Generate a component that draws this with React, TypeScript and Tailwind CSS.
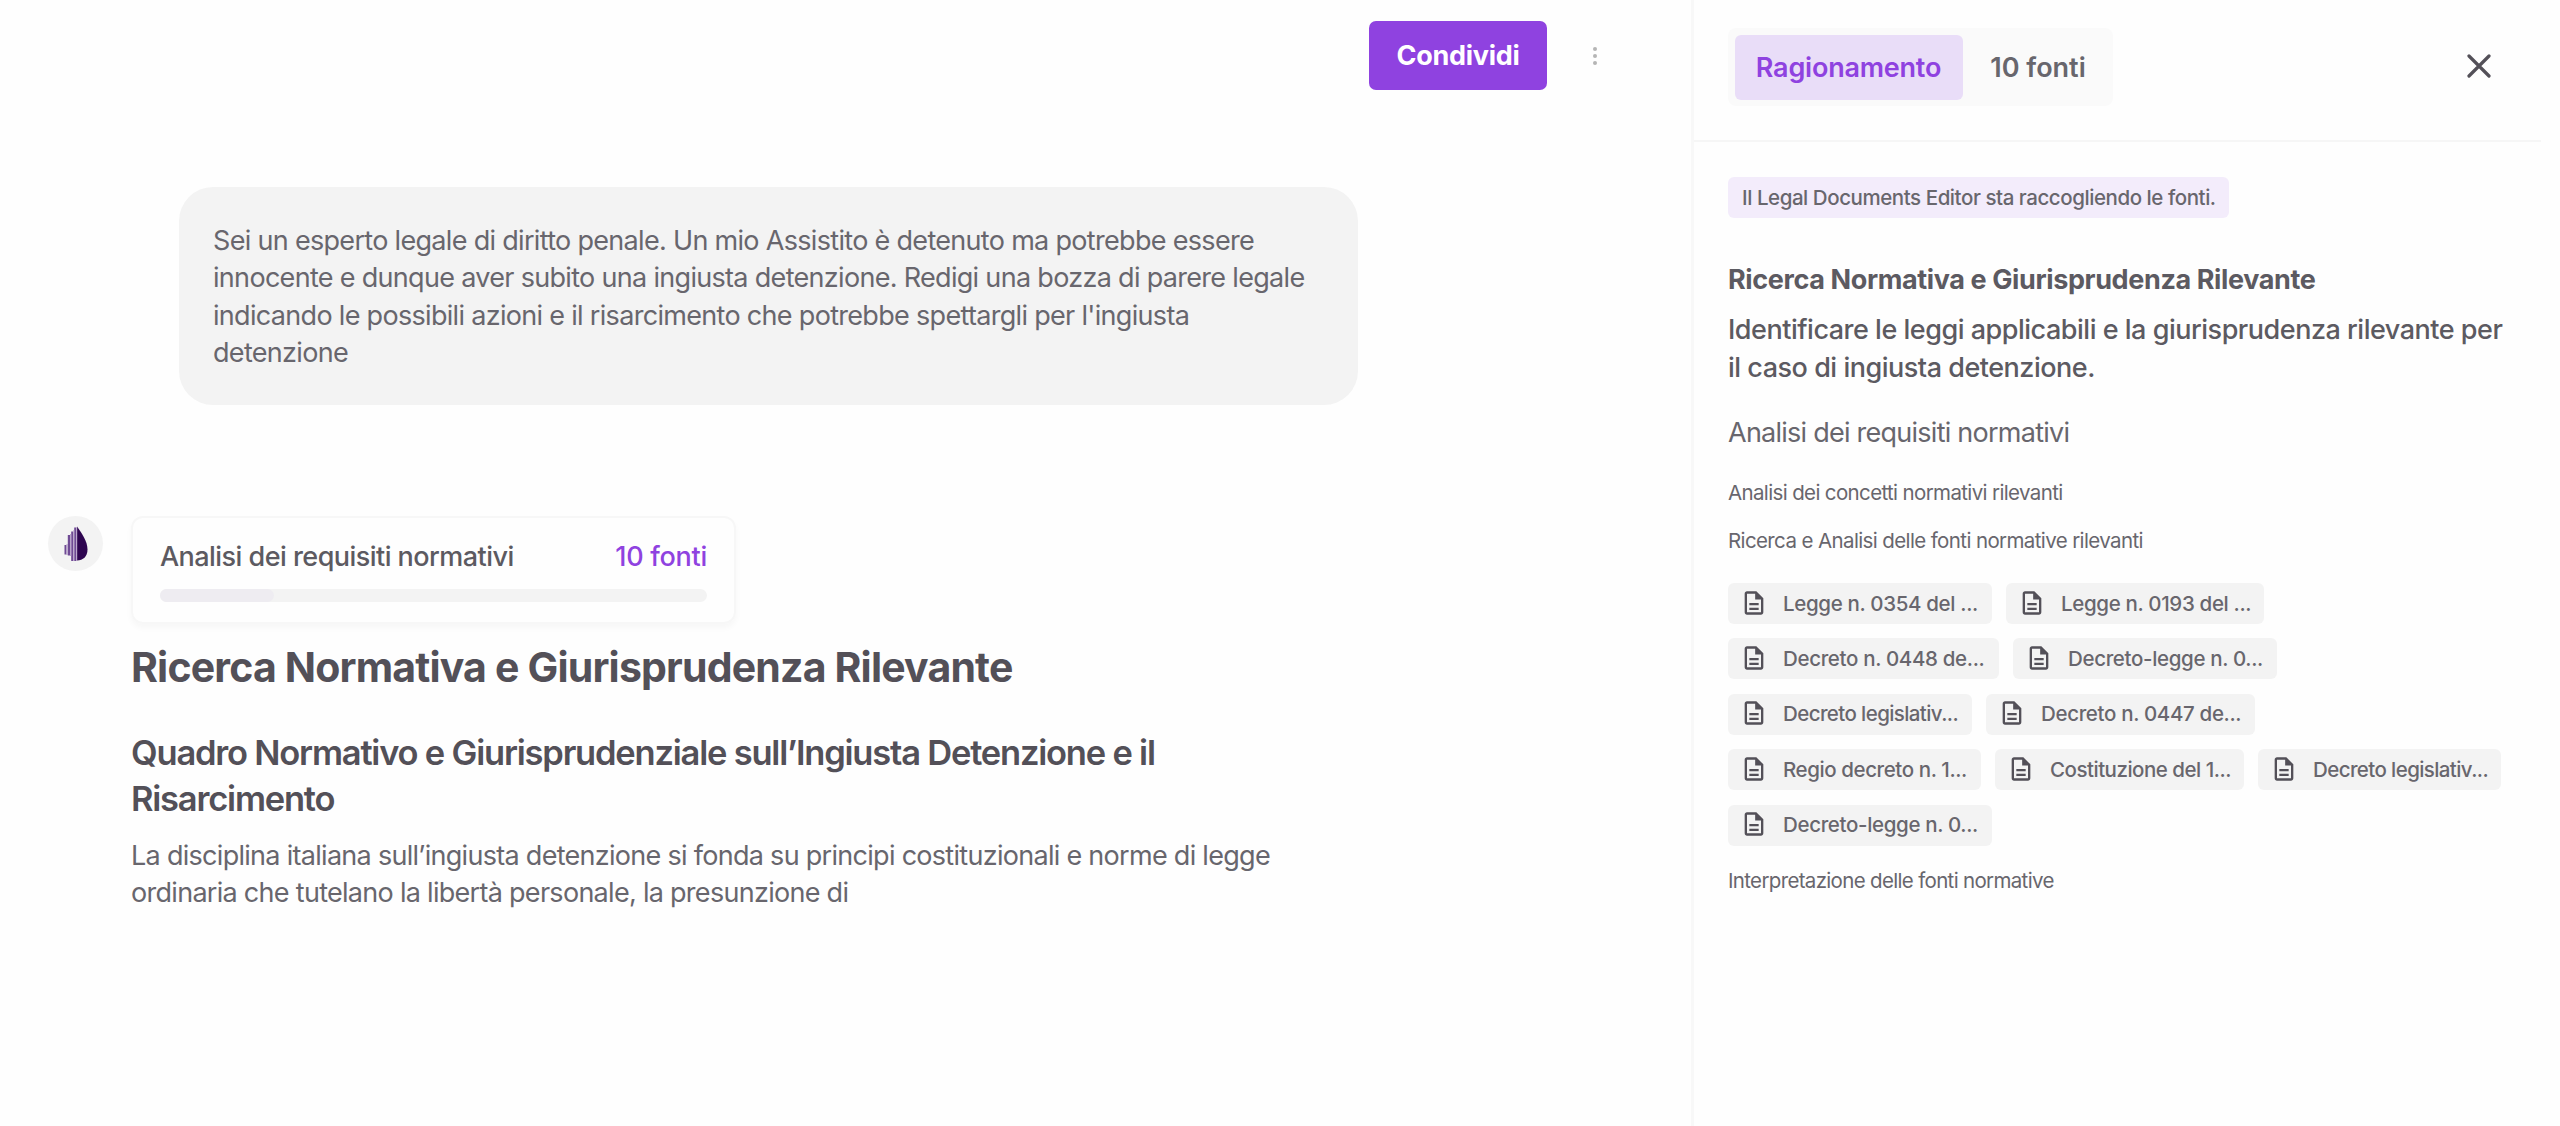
import { MdOutlineDescription } from 'react-icons/md';

type Source = {
    label: string;
    width: string;
};

const sourceRows: Source[][] = [
    [
        { label: 'Legge n. 0354 del ...', width: 'w-[264px]' },
        { label: 'Legge n. 0193 del ...', width: 'w-[258px]' },
    ],
    [
        { label: 'Decreto n. 0448 de...', width: 'w-[271px]' },
        { label: 'Decreto-legge n. 0...', width: 'w-[264px]' },
    ],
    [
        { label: 'Decreto legislativ...', width: 'w-[244px] tracking-[-0.029em]' },
        { label: 'Decreto n. 0447 de...', width: 'w-[269px]' },
    ],
    [
        { label: 'Regio decreto n. 1...', width: 'w-[253px] tracking-[-0.02em]' },
        { label: 'Costituzione del 1...', width: 'w-[249px] tracking-[-0.024em]' },
        { label: 'Decreto legislativ...', width: 'w-[243px] tracking-[-0.029em]' },
    ],
    [{ label: 'Decreto-legge n. 0...', width: 'w-[264px]' }],
];

const Logo = () => (
    <svg width="24" height="36" viewBox="0 0 24 36">
        <path d="M13 0.5C17 6 23.5 15 23.5 23.5c0 7-4.5 11-10.5 11z" fill="#2e0550" />
        <g fill="#6f4a94">
            <rect x="10.2" y="1.5" width="2.2" height="33.5" />
            <rect x="7.2" y="5.5" width="2.2" height="29.5" />
            <rect x="3.8" y="9" width="2.2" height="20.5" />
            <rect x="0.5" y="19" width="2" height="9.5" />
        </g>
        <g fill="#b9a5cc">
            <rect x="12.4" y="1" width="0.8" height="34" />
            <rect x="9.4" y="4" width="0.8" height="31" />
            <rect x="6" y="8" width="1.2" height="22" />
            <rect x="2.5" y="18" width="1.3" height="11" />
        </g>
    </svg>
);

const SourceChip = ({ label, width }: Source) => (
    <button
        className={`flex h-[41px] shrink-0 items-center whitespace-nowrap rounded-[6px] bg-[#f3f3f3] pl-3 text-[20.5px] font-medium text-[#68666d] ${width}`}
    >
        <MdOutlineDescription className="mb-0.5 mr-[15px] size-7 shrink-0 text-[#535058]" />
        <span className="pt-px">{label}</span>
    </button>
);

const Chat = () => (
    <main className="w-[1691px] shrink-0">
        <header className="flex items-center justify-end pr-[94px] pt-[21px]">
            <button className="h-[69px] w-[178px] rounded-[7px] bg-[#8f42e0] pt-0.5 text-[27px] font-bold tracking-[-0.01em] text-white">
                Condividi
            </button>
            <button className="ml-[46px] flex flex-col gap-[3px]">
                <span className="size-1 rounded-full bg-[#b5b5b5]" />
                <span className="size-1 rounded-full bg-[#b5b5b5]" />
                <span className="size-1 rounded-full bg-[#b5b5b5]" />
            </button>
        </header>

        <div className="ml-[179px] mt-[97px] h-[218px] w-[1179px] rounded-[34px] bg-[#f3f3f3] pl-[34px] pt-[35px]">
            <p className="whitespace-nowrap text-[27px] leading-[37.4px] tracking-[-0.0255em] text-[#68666d]">
                Sei un esperto legale di diritto penale. Un mio Assistito è detenuto ma potrebbe essere
                <br />
                innocente e dunque aver subito una ingiusta detenzione. Redigi una bozza di parere legale
                <br />
                indicando le possibili azioni e il risarcimento che potrebbe spettargli per l'ingiusta
                <br />
                detenzione
            </p>
        </div>

        <section className="mt-[111px] flex items-start pl-12">
            <div className="flex size-[55px] items-center justify-center rounded-full bg-[#f3f3f3]">
                <Logo />
            </div>

            <div className="ml-7">
                <div className="h-[108px] w-[605px] rounded-[12px] border-2 border-[#f7f7f7] px-[27px] pt-[19.5px] shadow-[0_4px_6px_rgba(0,0,0,0.03)]">
                    <div className="flex justify-between text-[27px] font-medium leading-[37px] tracking-[-0.02em]">
                        <span className="text-[#5c5a61]">Analisi dei requisiti normativi</span>
                        <span className="tracking-[-0.01em] text-[#8f42e0]">10 fonti</span>
                    </div>
                    <div className="mt-[14.5px] h-[13px] rounded-full bg-[#f3f3f3]">
                        <div className="h-full w-[114px] rounded-full bg-[#eeecf1]" />
                    </div>
                </div>

                <h1 className="mt-[15px] whitespace-nowrap text-[41px] font-bold leading-[56px] tracking-[-0.02em] text-[#535058]">
                    Ricerca Normativa e Giurisprudenza Rilevante
                </h1>
                <h2 className="mt-[34.5px] whitespace-nowrap text-[34.5px] font-semibold leading-[46.5px] tracking-[-0.035em] text-[#535058]">
                    Quadro Normativo e Giurisprudenziale sull’Ingiusta Detenzione e il
                    <br />
                    Risarcimento
                </h2>
                <p className="mt-[14.5px] whitespace-nowrap text-[27px] leading-[37.4px] tracking-[-0.0263em] text-[#68666d]">
                    La disciplina italiana sull’ingiusta detenzione si fonda su principi costituzionali e norme di legge
                    <br />
                    ordinaria che tutelano la libertà personale, la presunzione di
                </p>
            </div>
        </section>
    </main>
);

const Reasoning = () => (
    <aside className="h-[1126px] w-[869px] border-l-[3px] border-[#f8f8f8]">
        <header className="mr-[19px] flex h-[142px] items-start justify-between border-b-2 border-[#f6f6f6] pl-[34px] pr-[50px] pt-7">
            <div className="flex h-[78px] w-[385px] rounded-[8px] bg-[#fafafa] p-[6.5px] text-[27px] font-semibold">
                <button className="w-[228px] rounded-[6px] bg-[#e9ddf8] pt-[3px] tracking-[-0.008em] text-[#8f42e0]">
                    Ragionamento
                </button>
                <button className="flex-1 pl-[7px] pt-[3px] text-[#68666d]">10 fonti</button>
            </div>
            <button className="mt-[26px]">
                <svg width="24" height="24" viewBox="0 0 24 24" fill="none" stroke="#535058" strokeWidth="3.2" strokeLinecap="round">
                    <path d="M2 2l20 20M22 2L2 22" />
                </svg>
            </button>
        </header>

        <div className="flex flex-col items-start whitespace-nowrap pl-[34px] pt-[35px] text-[#68666d]">
            <span className="flex h-[41px] w-[501px] items-center rounded-[6px] bg-[#f3ecfb] pl-3.5 pt-0.5 text-[20.5px] font-medium tracking-[-0.0214em]">
                Il Legal Documents Editor sta raccogliendo le fonti.
            </span>
            <h3 className="mt-[42.7px] text-[27px] font-bold leading-[37px] tracking-[-0.0142em] text-[#5c5a61]">
                Ricerca Normativa e Giurisprudenza Rilevante
            </h3>
            <p className="mt-[13.5px] text-[27px] font-medium leading-[37.4px] tracking-[-0.018em] text-[#5c5a61]">
                Identificare le leggi applicabili e la giurisprudenza rilevante per
                <br />
                il caso di ingiusta detenzione.
            </p>
            <p className="mt-[27.5px] text-[27px] leading-[37px] tracking-[-0.0278em]">Analisi dei requisiti normativi</p>
            <p className="mt-[28.5px] text-[20.5px] leading-7 tracking-[-0.031em]">Analisi dei concetti normativi rilevanti</p>
            <p className="mt-5 text-[20.5px] leading-7 tracking-[-0.03em]">
                Ricerca e Analisi delle fonti normative rilevanti
            </p>

            <div className="mt-[28px] flex flex-col gap-[14.4px] tracking-[-0.34px]">
                {sourceRows.map((row, i) => (
                    <div key={i} className="flex gap-3.5">
                        {row.map((source) => (
                            <SourceChip key={source.label} {...source} />
                        ))}
                    </div>
                ))}
            </div>

            <p className="mt-[21px] text-[20.5px] leading-7 tracking-[-0.0325em]">Interpretazione delle fonti normative</p>
        </div>
    </aside>
);

const App = () => {
    return (
        <div className="flex h-[1126px] w-[2560px] overflow-hidden bg-[#fefefe] font-['Inter',sans-serif]">
            <Chat />
            <Reasoning />
        </div>
    );
};

export default App;
